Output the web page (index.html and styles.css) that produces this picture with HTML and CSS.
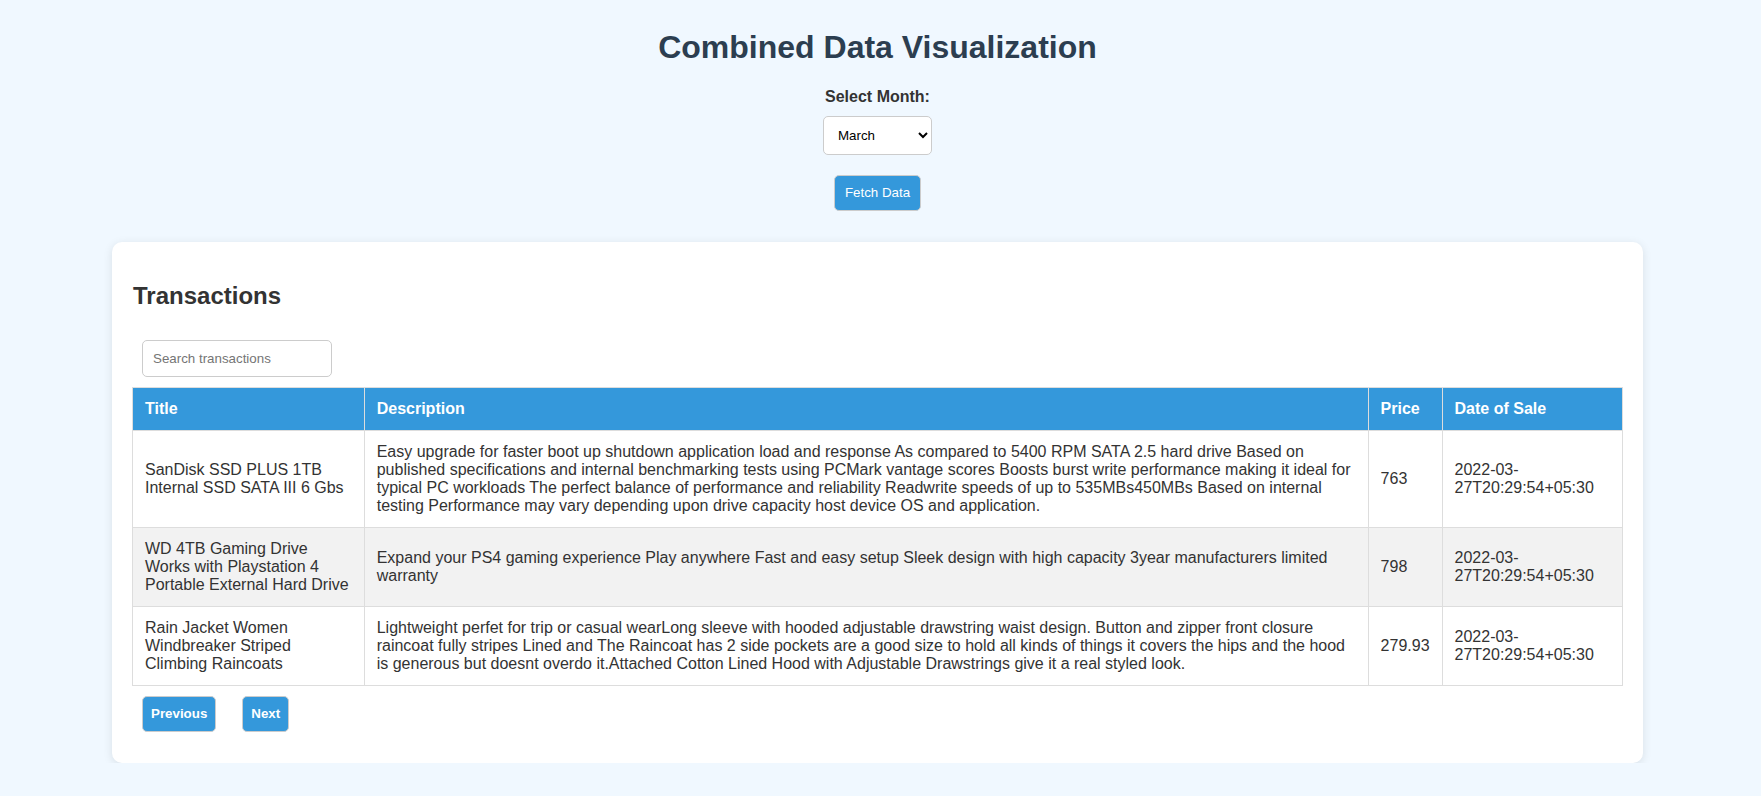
FILE: index.html
```html
<!DOCTYPE html>
<html lang="en">
<head>
<meta charset="utf-8">
<title>Combined Data Visualization</title>
<link rel="stylesheet" href="styles.css">
</head>
<body>
  <header class="top">
    <h1 class="page-title">Combined Data Visualization</h1>
    <label class="month-label" for="month">Select Month:</label>
    <select id="month" class="month-select">
      <option>January</option>
      <option>February</option>
      <option selected>March</option>
      <option>April</option>
      <option>May</option>
      <option>June</option>
      <option>July</option>
      <option>August</option>
      <option>September</option>
      <option>October</option>
      <option>November</option>
      <option>December</option>
    </select>
    <button class="fetch-btn" type="button">Fetch Data</button>
  </header>

  <section class="card">
    <h2 class="card-title">Transactions</h2>
    <div class="search-row">
      <input class="search-input" type="text" placeholder="Search transactions">
    </div>
    <table class="tx-table">
      <thead>
        <tr>
          <th>Title</th>
          <th>Description</th>
          <th>Price</th>
          <th>Date of Sale</th>
        </tr>
      </thead>
      <tbody>
        <tr>
          <td>SanDisk SSD PLUS 1TB Internal SSD SATA III 6 Gbs</td>
          <td>Easy upgrade for faster boot up shutdown application load and response As compared to 5400 RPM SATA 2.5 hard drive Based on published specifications and internal benchmarking tests using PCMark vantage scores Boosts burst write performance making it ideal for typical PC workloads The perfect balance of performance and reliability Readwrite speeds of up to 535MBs450MBs Based on internal testing Performance may vary depending upon drive capacity host device OS and application.</td>
          <td>763</td>
          <td>2022-03-27T20:29:54+05:30</td>
        </tr>
        <tr>
          <td>WD 4TB Gaming Drive Works with Playstation 4 Portable External Hard Drive</td>
          <td>Expand your PS4 gaming experience Play anywhere Fast and easy setup Sleek design with high capacity 3year manufacturers limited warranty</td>
          <td>798</td>
          <td>2022-03-27T20:29:54+05:30</td>
        </tr>
        <tr>
          <td>Rain Jacket Women Windbreaker Striped Climbing Raincoats</td>
          <td>Lightweight perfet for trip or casual wearLong sleeve with hooded adjustable drawstring waist design. Button and zipper front closure raincoat fully stripes Lined and The Raincoat has 2 side pockets are a good size to hold all kinds of things it covers the hips and the hood is generous but doesnt overdo it.Attached Cotton Lined Hood with Adjustable Drawstrings give it a real styled look.</td>
          <td>279.93</td>
          <td>2022-03-27T20:29:54+05:30</td>
        </tr>
      </tbody>
    </table>
    <div class="pager">
      <button class="pager-btn" type="button">Previous</button>
      <button class="pager-btn" type="button">Next</button>
    </div>
  </section>
</body>
</html>
```

FILE: styles.css
```css
html, body {
  background: #f0f8ff;
}

body {
  margin: 8px 14px 8px 8px;
  font-family: "Liberation Sans", Arial, sans-serif;
  color: #333;
}

.top {
  display: flex;
  flex-direction: column;
  align-items: center;
}

.page-title {
  margin: 21.44px 0;
  font-size: 32px;
  font-weight: bold;
  color: #2c3e50;
  line-height: normal;
}

.month-label {
  display: block;
  font-size: 16px;
  font-weight: bold;
  color: #333;
  line-height: normal;
}

.month-select {
  margin-top: 10px;
  width: 109px;
  height: 39px;
  box-sizing: border-box;
  padding: 0 6px 0 10px;
  border: 1px solid #ccc;
  border-radius: 5px;
  background: #fff;
  font-family: "Liberation Sans", Arial, sans-serif;
  font-size: 13.33px;
  color: #000;
}

.fetch-btn {
  margin-top: 20px;
  padding: 9px 10px;
  border: 1px solid #ccc;
  border-radius: 5px;
  background: #3498db;
  color: #fff;
  font-family: "Liberation Sans", Arial, sans-serif;
  font-size: 13.33px;
  line-height: 16px;
}

.card {
  width: 1531px;
  box-sizing: border-box;
  margin: 31px auto 0;
  padding: 20px;
  background: #fff;
  border-radius: 10px;
  box-shadow: 0 2px 10px rgba(0, 0, 0, 0.1);
}

.card-title {
  margin: 20px 0;
  padding-left: 1px;
  font-size: 24px;
  font-weight: bold;
  color: #333;
  line-height: normal;
}

.search-row {
  padding: 10px;
}

.search-input {
  display: block;
  width: 190px;
  height: 37px;
  box-sizing: border-box;
  padding: 10px;
  border: 1px solid #ccc;
  border-radius: 5px;
  font-family: "Liberation Sans", Arial, sans-serif;
  font-size: 13.33px;
  color: #333;
}

.search-input::placeholder {
  color: #757575;
}

.tx-table {
  width: 100%;
  border-collapse: collapse;
  font-size: 16px;
  color: #333;
}

.tx-table th,
.tx-table td {
  border: 1px solid #ddd;
  padding: 12px;
  text-align: left;
  line-height: normal;
}

.tx-table th {
  background: #3498db;
  color: #fff;
  font-weight: bold;
}

.tx-table tbody tr:nth-child(even) {
  background: #f2f2f2;
}

.pager {
  display: flex;
  gap: 26px;
  padding: 10px 10px 11px;
}

.pager-btn {
  padding: 9px 8px;
  border: 1px solid #ccc;
  border-radius: 5px;
  background: #3498db;
  color: #fff;
  font-family: "Liberation Sans", Arial, sans-serif;
  font-size: 13.33px;
  font-weight: bold;
  line-height: 16px;
}
```
